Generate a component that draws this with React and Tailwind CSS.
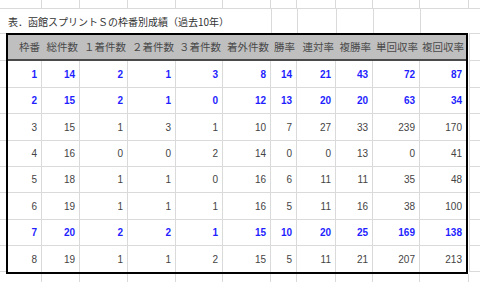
import React from 'react'

const jp = '[font-family:"Noto_Sans_CJK_JP","Noto_Sans",sans-serif]'
const num = '[font-family:"Liberation_Sans",Arial,sans-serif]'

// widths of the table columns (inner, between the 2px borders)
const colW = ['w-[34px]', 'w-[38px]', 'w-[48px]', 'w-[48px]', 'w-[47px]', 'w-[48px]', 'w-[26px]', 'w-[39px]', 'w-[37px]', 'w-[47px]', 'w-[46px]']
// sheet columns from x=0, used above and below the table
const sheetW = ['w-[42px]', 'w-[38px]', 'w-[48px]', 'w-[48px]', 'w-[47px]', 'w-[48px]', 'w-[26px]', 'w-[39px]', 'w-[37px]', 'w-[47px]', 'w-[49px]']
const rowH = ['h-[27px]', 'h-[26px]', 'h-[27px]', 'h-[26px]', 'h-[26px]', 'h-[27px]', 'h-[26px]', 'h-[26px]']

const headers = ['枠番', '総件数', '１着件数', '２着件数', '３着件数', '着外件数', '勝率', '連対率', '複勝率', '単回収率', '複回収率']

const rows = [
    { hot: true, v: [1, 14, 2, 1, 3, 8, 14, 21, 43, 72, 87] },
    { hot: true, v: [2, 15, 2, 1, 0, 12, 13, 20, 20, 63, 34] },
    { hot: false, v: [3, 15, 1, 3, 1, 10, 7, 27, 33, 239, 170] },
    { hot: false, v: [4, 16, 0, 0, 2, 14, 0, 0, 13, 0, 41] },
    { hot: false, v: [5, 18, 1, 1, 0, 16, 6, 11, 11, 35, 48] },
    { hot: false, v: [6, 19, 1, 1, 1, 16, 5, 11, 16, 38, 100] },
    { hot: true, v: [7, 20, 2, 2, 1, 15, 10, 20, 25, 169, 138] },
    { hot: false, v: [8, 19, 1, 1, 2, 15, 5, 11, 21, 207, 213] },
]

const SheetRow = ({ h }) => (
    <div className={`flex ${h}`}>
        {sheetW.map((w, i) => (
            <div key={i} className={`${w} shrink-0 border-r border-[#dadada]`} />
        ))}
        <div className="flex-1" />
    </div>
)

const SideStrip = ({ className }) => (
    <div className={`flex flex-col ${className}`}>
        <div className="h-[28px] border-t border-b border-[#dadada]" />
        {rowH.map((h, i) => (
            <div key={i} className={`${h} border-b border-[#dadada]`} />
        ))}
    </div>
)

export default function App() {
    return (
        <div className="w-[480px] h-[282px] bg-white overflow-hidden">
            <SheetRow h="h-[9px] border-b border-[#dadada]" />

            {/* title row */}
            <div className="flex h-[24px]">
                <div className={`w-[271px] shrink-0 flex items-center pl-[8px] text-[10px] text-[#333] whitespace-nowrap ${jp}`}>
                    表．函館スプリントＳの枠番別成績（過去10年）
                </div>
                {sheetW.slice(6).map((w, i) => (
                    <div key={i} className={`${w} shrink-0 border-l border-[#dadada]`} />
                ))}
            </div>

            <div className="flex">
                <SideStrip className="w-[6px] shrink-0" />

                <div className="border-2 border-black shrink-0">
                    <div className="flex h-[26px] bg-[#bfbfbf] border-b-2 border-[#4a4a4a]">
                        {headers.map((t, i) => (
                            <div key={i} className={`${colW[i]} shrink-0 flex items-center justify-end pr-[2px] text-[10.5px] text-[#4a4a4a] whitespace-nowrap ${jp}`}>
                                {t}
                            </div>
                        ))}
                    </div>
                    {rows.map((r, ri) => (
                        <div key={ri} className={`flex ${rowH[ri]} ${ri < rows.length - 1 ? 'border-b border-[#dadada]' : ''}`}>
                            {r.v.map((v, ci) => (
                                <div
                                    key={ci}
                                    className={`${colW[ci]} shrink-0 flex items-center justify-end pr-[4px] text-[10px] ${num} ${ci < r.v.length - 1 ? 'border-r border-[#dadada]' : ''} ${r.hot ? 'font-bold text-[#1f1fff]' : 'text-[#444]'}`}
                                >
                                    {v}
                                </div>
                            ))}
                        </div>
                    ))}
                </div>

                <div className="flex-1 pl-px">
                    <SideStrip className="border-l border-[#dadada]" />
                </div>
            </div>

            <SheetRow h="h-[10px]" />
        </div>
    )
}
